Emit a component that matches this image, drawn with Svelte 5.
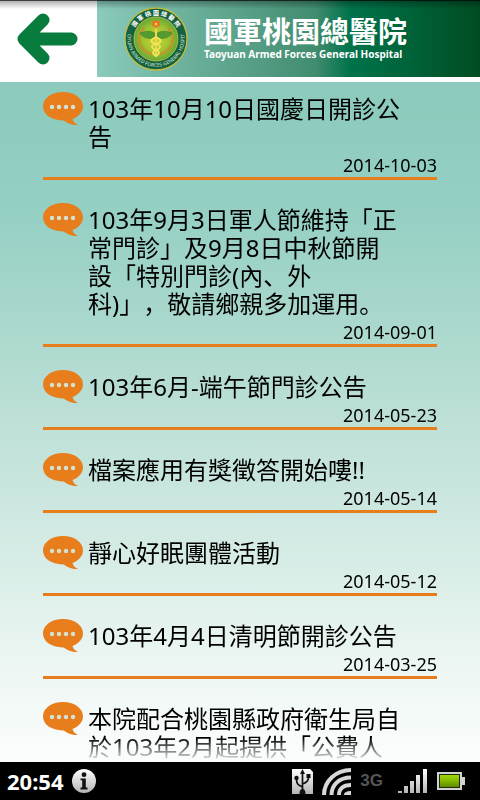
<script lang="ts">
	interface Notice {
		id: number;
		title: string;
		date: string;
	}

	const notices: Notice[] = [
		{ id: 1, title: '103年10月10日國慶日開診公告', date: '2014-10-03' },
		{ id: 2, title: '103年9月3日軍人節維持「正常門診」及9月8日中秋節開設「特別門診(內、外\n科)」，敬請鄉親多加運用。', date: '2014-09-01' },
		{ id: 3, title: '103年6月-端午節門診公告', date: '2014-05-23' },
		{ id: 4, title: '檔案應用有獎徵答開始嘍!!', date: '2014-05-14' },
		{ id: 5, title: '靜心好眠團體活動', date: '2014-05-12' },
		{ id: 6, title: '103年4月4日清明節開診公告', date: '2014-03-25' },
		{ id: 7, title: '本院配合桃園縣政府衛生局自於103年2月起提供「公費人', date: '' }
	];

	function goBack() {
		history.back();
	}
</script>

<div class="screen">
	<header class="top-bar">
		<button class="back" aria-label="返回" on:click={goBack}>
			<svg width="62" height="52" viewBox="0 0 62 52">
				<path d="M27 7 L8 26 L27 45 M8 26 H55" fill="none" stroke="#087c3c" stroke-width="13" stroke-linecap="round" stroke-linejoin="round" />
			</svg>
		</button>
		<div class="banner">
			<svg class="seal" width="64" height="64" viewBox="0 0 64 64" aria-hidden="true">
				<defs>
					<radialGradient id="seal-fill">
						<stop offset="0" stop-color="#c9d832" />
						<stop offset="0.6" stop-color="#a0c432" />
						<stop offset="1" stop-color="#65a834" />
					</radialGradient>
					<path id="arc-top" d="M8 32 A24 24 0 0 1 56 32" />
					<path id="arc-bottom" d="M4 26 A28.5 28.5 0 1 0 60 26" />
				</defs>
				<circle cx="32" cy="32" r="31" fill="#16623f" stroke="#c2bd45" stroke-width="1.3" />
				<circle cx="32" cy="32" r="22" fill="url(#seal-fill)" stroke="#c6c94a" stroke-width="0.8" />
				<text class="seal-cn"><textPath href="#arc-top" startOffset="50%" text-anchor="middle">國 軍 桃 園 總 醫 院</textPath></text>
				<text class="seal-en"><textPath href="#arc-bottom" startOffset="50%" text-anchor="middle">TAOYUAN ARMED FORCES GENERAL HOSPITAL</textPath></text>
				<g fill="none" stroke="#cf8a2b" stroke-width="2.6" stroke-dasharray="2.4 0.8">
					<path d="M20 21 C12 30 14 43 28 47" />
					<path d="M44 21 C52 30 50 43 36 47" />
				</g>
				<path d="M32 27 C27 23 22 24 16 26 C19 31 25 33 32 30 C39 33 45 31 48 26 C42 24 37 23 32 27Z" fill="#559a31" stroke="#3c822f" stroke-width="0.6" />
				<path d="M32 19 V50" stroke="#f0d64d" stroke-width="2" />
				<path d="M32 30 C25 33 27 36 32 37 C38 39 37 41 32 43 C27 45 29 47 32 49 M32 30 C39 33 37 36 32 37 C26 39 27 41 32 43 C37 45 35 47 32 49" fill="none" stroke="#f4e45b" stroke-width="1.8" />
				<path d="M32 12 L33.5 14.5 L36.5 14.5 L35 17 L36.5 19 L33.5 19.3 L32 22 L30.5 19.3 L27.5 19 L29 17 L27.5 14.5 L30.5 14.5Z" fill="#ee6a25" />
				<circle cx="32" cy="17" r="1.5" fill="#f6cf38" />
			</svg>
			<h1 class="name">
				<span class="name-cn">國軍桃園總醫院</span>
				<span class="name-en">Taoyuan Armed Forces General Hospital</span>
			</h1>
		</div>
	</header>

	<main class="content">
		<ul class="notices">
			{#each notices as notice (notice.id)}
				<li class="notice">
					<div class="row">
						<svg class="bubble" width="40" height="34" viewBox="0 0 40 34" aria-hidden="true">
							<path d="M20 0 C31 0 40 6 40 14.3 C40 20 36 24.5 29.5 27 C30 29.5 32 31.5 35 33 C29 33.3 24 31 21 28.4 C9 28.8 0 23 0 14.3 C0 6 9 0 20 0Z" fill="#e87d1c" />
							<g fill="#d3e3d2">
								<circle cx="9" cy="15" r="2.2" />
								<circle cx="16" cy="15" r="2.2" />
								<circle cx="23" cy="15" r="2.2" />
								<circle cx="30" cy="15" r="2.2" />
							</g>
						</svg>
						<span class="title">{notice.title}</span>
					</div>
					<time class="date">{notice.date}</time>
				</li>
			{/each}
		</ul>
	</main>

	<footer class="status-bar">
		<span class="clock">20:54</span>
		<svg width="24" height="24" viewBox="0 0 24 24" aria-hidden="true">
			<defs>
				<linearGradient id="metal" x1="0" y1="0" x2="0" y2="1">
					<stop offset="0" stop-color="#fff" />
					<stop offset="1" stop-color="#b4b4b4" />
				</linearGradient>
			</defs>
			<circle cx="12" cy="12" r="12" fill="url(#metal)" />
			<circle cx="12" cy="5.7" r="2.4" fill="#111" />
			<path d="M8.5 9.5 H13.8 V18.5 H15.5 V20.5 H8.5 V18.5 H10.2 V11.3 H8.5Z" fill="#111" />
		</svg>
		<div class="indicators">
			<svg width="21" height="25" viewBox="0 0 21 25" aria-hidden="true">
				<path d="M0 0 H18 L21 3 V25 H0Z" fill="url(#metal)" />
				<g fill="none" stroke="#111" stroke-width="1.7">
					<path d="M10.5 3 V21 M10.5 18 C5 16 4.5 14 4.5 9 M10.5 15 C16 13 16.5 11 16.5 7" />
				</g>
				<path d="M10.5 0 L13 5 H8Z M14.5 5 H18.5 V9 H14.5Z" fill="#111" />
				<circle cx="4.5" cy="9" r="2.2" fill="#111" />
				<path d="M7.5 25 C7.5 21 9 20 10.5 20 C12 20 13.5 21 13.5 25Z" fill="#111" />
			</svg>
			<svg class="wifi" width="29" height="27" viewBox="0 0 29 27" aria-hidden="true">
				<g fill="none" stroke="#d8d8d8" stroke-width="4">
					<path d="M2 27 C2 13 14 2 29 2" />
					<path d="M9.5 27 C9.5 17 17 9.5 29 9.5" />
					<path d="M17 27 C17 21 21 17 29 17" />
				</g>
				<path d="M22 27 C22 24 25 23 29 23 V27Z" fill="#d8d8d8" />
			</svg>
			<span class="network">3G</span>
			<svg class="signal" width="30" height="25" viewBox="0 0 30 25" aria-hidden="true">
				<path d="M0 22 H4 V24 H0Z M6 17 H10 V24 H6Z M12 12 H16 V24 H12Z M18 6 H22 V24 H18Z M25 0 H29 V24 H25Z" fill="url(#metal)" />
			</svg>
			<svg width="28" height="18" viewBox="0 0 28 18" aria-hidden="true">
				<defs>
					<linearGradient id="charge" x1="0" y1="0" x2="0" y2="1">
						<stop offset="0" stop-color="#a4d60c" />
						<stop offset="0.5" stop-color="#82b800" />
						<stop offset="1" stop-color="#5d8a00" />
					</linearGradient>
				</defs>
				<path d="M0 0 H25 V5 H28 V13 H25 V18 H0Z" fill="#d2d2d2" />
				<path d="M2 2 H23 V16 H2Z" fill="#202a08" />
				<path d="M3 3 H22 V15 H3Z" fill="url(#charge)" />
			</svg>
		</div>
	</footer>
</div>

<style>
	:global(body) {
		margin: 0;
	}

	.screen {
		display: flex;
		flex-direction: column;
		height: 100vh;
		background: #fff;
		color: #000;
		font-family: 'Noto Sans', 'Noto Sans CJK SC', sans-serif;
	}

	.top-bar {
		position: relative;
		display: flex;
		height: 77px;
		flex-shrink: 0;
		margin-bottom: 5px;
	}

	/* shadow cast by the window edge */
	.top-bar::before {
		content: '';
		position: absolute;
		inset: 0 0 auto;
		height: 9px;
		background: linear-gradient(rgba(0, 0, 0, 0.75) 0 1px, rgba(0, 0, 0, 0.3) 1px, transparent);
		pointer-events: none;
	}

	.back {
		display: flex;
		align-items: center;
		justify-content: center;
		width: 97px;
		padding: 0 4px 0 0;
		border: none;
		background: #fff;
		cursor: pointer;
	}

	.banner {
		flex: 1;
		display: flex;
		align-items: center;
		gap: 16px;
		padding-left: 27px;
		background: linear-gradient(90deg, #8bcabc, #418c6f 57%, #00734a 66%, #006238 82%, #004c22);
	}

	.seal {
		flex-shrink: 0;
	}

	.seal-cn {
		font-size: 6px;
		font-weight: 700;
		fill: #fff;
	}

	.seal-en {
		font-size: 5px;
		fill: #d5e8dc;
	}

	.name {
		display: flex;
		flex-direction: column;
		margin: 0;
		padding-bottom: 2px;
		color: #fff;
		white-space: nowrap;
	}

	.name-cn {
		font-size: 29px;
		font-weight: 700;
		line-height: 32px;
	}

	.name-en {
		font-size: 10px;
		font-weight: 700;
		line-height: 12px;
	}

	.content {
		flex: 1;
		min-height: 0;
		overflow: hidden;
		background: linear-gradient(#8bcabc, #96d0c4 20%, #b0dad0 40%, #d0e9e2 65%, #eef7f4 87%, #fbfdfc);
	}

	.notices {
		box-sizing: border-box;
		height: 100%;
		margin: 0;
		padding: 10px 43px 0;
		overflow: hidden;
		list-style: none;
		mask-image: linear-gradient(#000 calc(100% - 24px), transparent);
	}

	.notice {
		margin-bottom: 23px;
		border-bottom: 3px solid #e87d1c;
	}

	.row {
		display: flex;
		align-items: flex-start;
		gap: 5px;
	}

	.bubble {
		flex-shrink: 0;
	}

	.title {
		flex: 1;
		padding: 3px 36px 3px 0;
		font-size: 24px;
		line-height: 28px;
		white-space: pre-line;
		text-spacing-trim: space-all;
	}

	.date {
		display: block;
		height: 23px;
		font-size: 18px;
		line-height: 23px;
		text-align: right;
	}

	.status-bar {
		display: flex;
		align-items: center;
		gap: 8px;
		height: 38px;
		flex-shrink: 0;
		padding: 0 15px 0 7px;
		background: #000;
		color: #fff;
	}

	.clock {
		font-size: 22px;
		font-weight: 700;
	}

	.indicators {
		display: flex;
		align-items: center;
		gap: 9px;
		margin-left: auto;
	}

	.network {
		margin-right: 6px;
		color: #555;
		font-family: 'Liberation Sans', sans-serif;
		font-size: 17px;
		font-weight: 700;
	}
</style>
